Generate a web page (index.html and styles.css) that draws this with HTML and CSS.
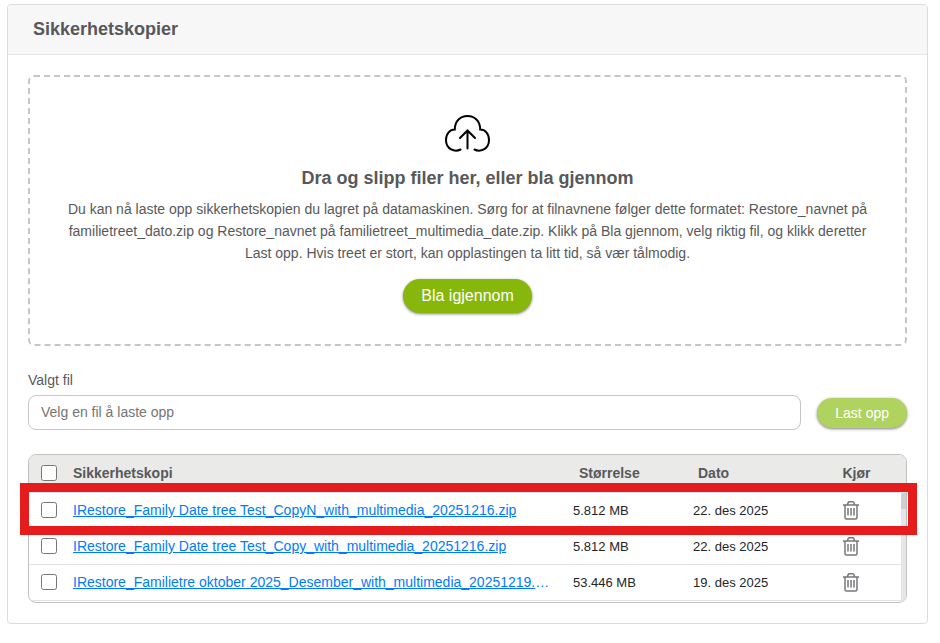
FILE: index.html
```
<!DOCTYPE html>
<html lang="no">
<head>
    <meta charset="UTF-8">
    <meta name="viewport" content="width=device-width, initial-scale=1.0">
    <title>Sikkerhetskopier</title>
    <link rel="stylesheet" href="styles.css">
</head>
<body>
    <svg class="sprite" aria-hidden="true">
        <symbol id="trash" viewBox="0 0 18 20">
            <path d="M1 5h16M5.500 4.500L6.200 2.500Q6.500 1.700 7.400 1.700h3.200Q11.500 1.700 11.800 2.500L12.500 4.500M3 5v12.500Q3 19 4.500 19h9Q15 19 15 17.500V5M6 8v7.500M9 8v7.500M12 8v7.500"/>
        </symbol>
    </svg>

    <main class="panel">
        <header class="panel-header">
            <h1>Sikkerhetskopier</h1>
        </header>
        <div class="panel-body">
            <section class="dropzone">
                <svg class="cloud" viewBox="0 0 46 38" aria-hidden="true">
                    <path d="M15.500 35.500C10 38.500 1 35.500 1 26C1 19.500 5 15.500 9.800 15.500C9.800 7 15.500 2 22.500 2S35.200 7 35.200 15.500C40 15.500 44 19.500 44 26C44 35.500 35 38.500 29.500 35.500"/>
                    <path d="M22.500 34.500V16.500M15 24L22.500 16.500L30 24"/>
                </svg>
                <h2>Dra og slipp filer her, eller bla gjennom</h2>
                <p>Du kan nå laste opp sikkerhetskopien du lagret på datamaskinen. Sørg for at filnavnene følger dette formatet: Restore_navnet på familietreet_dato.zip og Restore_navnet på familietreet_multimedia_date.zip. Klikk på Bla gjennom, velg riktig fil, og klikk deretter Last opp. Hvis treet er stort, kan opplastingen ta litt tid, så vær tålmodig.</p>
                <button type="button" class="btn browse">Bla igjennom</button>
            </section>

            <form class="upload">
                <label for="file">Valgt fil</label>
                <div class="upload-row">
                    <input type="text" id="file" placeholder="Velg en fil å laste opp" readonly>
                    <button type="button" class="btn send">Last opp</button>
                </div>
            </form>

            <div class="backups">
                <div class="table-wrap">
                    <table>
                        <thead>
                            <tr>
                                <th class="check"><input type="checkbox" aria-label="Velg alle"></th>
                                <th class="name">Sikkerhetskopi</th>
                                <th class="size">Størrelse</th>
                                <th class="date">Dato</th>
                                <th class="run">Kjør</th>
                            </tr>
                        </thead>
                        <tbody>
                            <tr>
                                <td class="check"><input type="checkbox" aria-label="Velg kopi 1"></td>
                                <td class="name"><a href="#">IRestore_Family Date tree Test_CopyN_with_multimedia_20251216.zip</a></td>
                                <td class="size">5.812 MB</td>
                                <td class="date">22. des 2025</td>
                                <td class="run"><button type="button" class="delete" aria-label="Slett"><svg><use href="#trash"/></svg></button></td>
                            </tr>
                            <tr>
                                <td class="check"><input type="checkbox" aria-label="Velg kopi 2"></td>
                                <td class="name"><a href="#">IRestore_Family Date tree Test_Copy_with_multimedia_20251216.zip</a></td>
                                <td class="size">5.812 MB</td>
                                <td class="date">22. des 2025</td>
                                <td class="run"><button type="button" class="delete" aria-label="Slett"><svg><use href="#trash"/></svg></button></td>
                            </tr>
                            <tr>
                                <td class="check"><input type="checkbox" aria-label="Velg kopi 3"></td>
                                <td class="name"><a href="#">IRestore_Familietre oktober 2025_Desember_with_multimedia_20251219.zip</a></td>
                                <td class="size">53.446 MB</td>
                                <td class="date">19. des 2025</td>
                                <td class="run"><button type="button" class="delete" aria-label="Slett"><svg><use href="#trash"/></svg></button></td>
                            </tr>
                        </tbody>
                    </table>
                    <div class="scroll-track"><div class="scroll-thumb"></div></div>
                </div>
                <div class="highlight"></div>
            </div>
        </div>
    </main>
</body>
</html>
```
FILE: styles.css
```
* {
    box-sizing: border-box;
}
body {
    margin: 0;
    padding: 4px 12px 19px 7px;
    background-color: #fff;
    color: #58585a;
    font-family: "Liberation Sans", Arial, sans-serif;
    font-size: 14px;
}
h1, h2, p {
    margin: 0;
}
.sprite {
    display: none;
}
.panel {
    border: 1px solid #dcdcdc;
    border-radius: 4px;
    overflow: hidden;
}
.panel-header {
    padding: 12px 25px 13px;
    background-color: #f7f7f7;
    border-bottom: 1px solid #e6e6e6;
}
h1, h2 {
    font-size: 18px;
    line-height: 24px;
    font-weight: bold;
}
.panel-body {
    padding: 20px;
}
.dropzone {
    display: flex;
    flex-direction: column;
    align-items: center;
    padding: 37px 24px 31px;
    border: 2px dashed #c6c6c6;
    border-radius: 6px;
    text-align: center;
}
.cloud {
    width: 46px;
    height: 38px;
    margin-bottom: 14px;
    fill: none;
    stroke: #000;
    stroke-width: 2;
    stroke-linecap: round;
}
.dropzone p {
    margin: 8px 0 15px;
    line-height: 22px;
}
.btn {
    border: none;
    border-radius: 17px;
    color: #fff;
    font-family: inherit;
    box-shadow: 0 1px 3px rgba(0, 0, 0, 0.5);
    cursor: pointer;
}
.browse {
    height: 34px;
    padding: 0 18px;
    background-color: #86b70a;
    font-size: 16px;
}
.upload {
    margin-top: 26px;
}
.upload label {
    display: block;
    line-height: 16px;
    margin-bottom: 7px;
}
.upload-row {
    display: flex;
    align-items: center;
    gap: 16px;
}
.upload input {
    flex: 1;
    min-width: 0;
    height: 35px;
    padding: 0 12px 2px;
    border: 1px solid #c6c6c6;
    border-radius: 8px;
    font-family: inherit;
    font-size: 14px;
}
.upload input::placeholder {
    color: #757575;
}
.send {
    height: 30px;
    padding: 0 18px;
    background-color: #b0d25f;
    font-size: 14px;
}
.backups {
    position: relative;
    margin-top: 24px;
}
.table-wrap {
    position: relative;
    padding-bottom: 1px;
    border: 1px solid #c0c0c0;
    border-radius: 8px;
    overflow: hidden;
}
table {
    width: 100%;
    table-layout: fixed;
    border-collapse: separate;
    border-spacing: 0;
}
th, td {
    height: 36px;
    padding: 0 6px;
    border-bottom: 1px solid #dee2e6;
    text-align: left;
}
th {
    height: 38px;
    padding-bottom: 2px;
    background-color: #eaeae8;
}
td {
    color: #212529;
    font-size: 13px;
}
.check {
    width: 38px;
    padding-left: 12px;
    padding-right: 0;
}
.check input {
    display: block;
    width: 16px;
    height: 16px;
    margin: 0;
}
td.check {
    padding-bottom: 1px;
}
.size, .date {
    width: 120px;
}
th.size {
    padding-left: 12px;
}
th.date {
    padding-left: 11px;
}
.run {
    width: 99px;
    text-align: center;
}
td.run {
    padding-right: 17px;
    padding-bottom: 1px;
}
td.name {
    padding-right: 14px;
    padding-bottom: 1px;
    color: #007bff;
    font-size: 14px;
    white-space: nowrap;
    overflow: hidden;
    text-overflow: ellipsis;
}
td a {
    color: #007bff;
    text-decoration: underline;
}
.delete {
    display: block;
    margin: 0 auto;
    padding: 0;
    border: none;
    background: none;
    cursor: pointer;
}
.delete svg {
    display: block;
    width: 18px;
    height: 20px;
    fill: none;
    stroke: #77777a;
    stroke-width: 1.5;
}
.scroll-track {
    position: absolute;
    top: 38px;
    right: 0;
    bottom: 0;
    width: 5px;
    background-color: #e6e6e6;
}
.scroll-thumb {
    height: 16px;
    background-color: #cfcfcf;
}
/* frame around the first backup */
.highlight {
    position: absolute;
    top: 29px;
    left: -8px;
    right: -10px;
    height: 52px;
    border: 9px solid #e61b1b;
    pointer-events: none;
}
```
